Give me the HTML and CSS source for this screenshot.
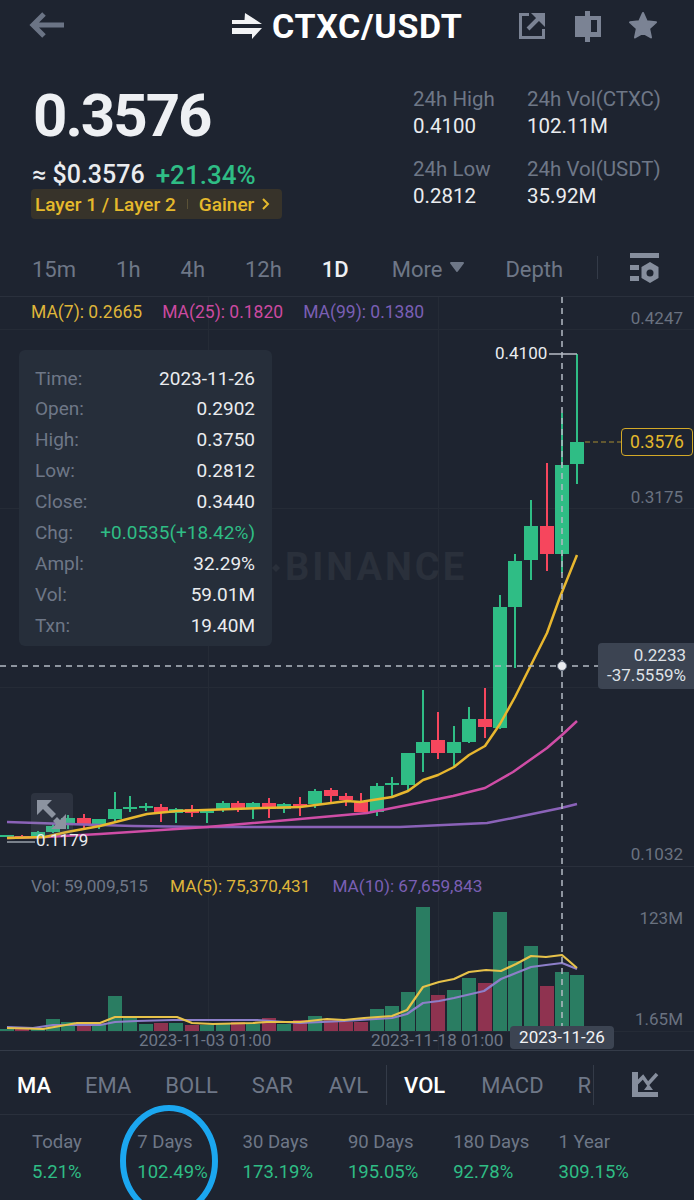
FILE: index.html
```html
<!DOCTYPE html>
<html lang="en">
<head>
  <meta charset="UTF-8">
  <title>CTXC/USDT</title>
  <link rel="stylesheet" href="styles.css">
</head>
<body>

<div class="page">

  <!-- top bar -->
  <div class="top-bar">
    <svg class="icon-back" width="36" height="28" viewBox="0 0 36 28">
      <path d="M35 13H4M15 2L4 13l11 11" fill="none" stroke="#6b7485" stroke-width="5"/>
    </svg>
    <div class="pair">
      <svg width="31" height="28" viewBox="0 0 31 28">
        <path d="M0 8h12.500l.5-7 17 11H0zM0 16h30L20 27v-5H0z" fill="#f2f3f5"/>
      </svg>
      <span class="pair-name">CTXC/USDT</span>
    </div>
    <div class="top-actions">
      <svg width="28" height="28" viewBox="0 0 28 28">
        <path d="M11 2.500H2.500v23h23V17" fill="none" stroke="#7b8394" stroke-width="3"/>
        <path d="M10 17L23 4" fill="none" stroke="#7b8394" stroke-width="4"/>
        <path d="M13 1h14v14z" fill="#7b8394"/>
      </svg>
      <svg width="28" height="33" viewBox="0 0 28 33">
        <path d="M1 6h26v21H1z" fill="#7b8394"/>
        <path d="M11 1h5v31h-5z" fill="#7b8394"/>
        <path d="M17 10h6v12h-6z" fill="#1e2430"/>
      </svg>
      <svg class="icon-star" width="30" height="30" viewBox="0 0 30 30">
        <path d="M15 2l3.800 8.300 9.200 1-6.900 6.100 1.900 9.100-8-4.600-8 4.600 1.900-9.100L2 11.300l9.200-1z" fill="#7b8394" stroke="#7b8394" stroke-width="2" stroke-linejoin="round"/>
      </svg>
    </div>
  </div>

  <!-- price summary -->
  <div class="summary">
    <div class="summary-left">
      <div class="last-price">0.3576</div>
      <div class="fiat-row">
        <span class="fiat">≈ $0.3576</span>
        <span class="change">+21.34%</span>
      </div>
      <div class="tag">
        <span>Layer 1 / Layer 2</span>
        <i class="tag-sep"></i>
        <span>Gainer</span>
        <svg width="9" height="12" viewBox="0 0 9 12">
          <path d="M2 1l5 5-5 5" fill="none" stroke="#e5b92c" stroke-width="2"/>
        </svg>
      </div>
    </div>
    <div class="stats">
      <div><div class="stat-label">24h High</div><div class="stat-value">0.4100</div></div>
      <div><div class="stat-label">24h Vol(CTXC)</div><div class="stat-value">102.11M</div></div>
      <div><div class="stat-label">24h Low</div><div class="stat-value">0.2812</div></div>
      <div><div class="stat-label">24h Vol(USDT)</div><div class="stat-value">35.92M</div></div>
    </div>
  </div>

  <!-- intervals -->
  <div class="intervals">
    <span>15m</span>
    <span>1h</span>
    <span>4h</span>
    <span>12h</span>
    <span class="active">1D</span>
    <span class="more">More
      <svg width="16" height="12" viewBox="0 0 16 12"><path d="M2 2h12L8 10z" fill="#6e7787" stroke="#6e7787" stroke-width="2" stroke-linejoin="round"/></svg>
    </span>
    <span>Depth</span>
    <i class="v-sep"></i>
    <svg class="icon-settings" width="30" height="31" viewBox="0 0 30 31">
      <path d="M0 0h29v5H0zM0 12h9v5H0zM0 23h9v5H0z" fill="#868e9d"/>
      <path d="M20 9l8.500 5v11L20 30l-8.500-5V14z" fill="#868e9d"/>
      <circle cx="20" cy="20" r="3.500" fill="#1e2430"/>
    </svg>
  </div>

  <!-- chart -->
  <div class="chart">
    <svg class="chart-canvas" id="chartCanvas" width="694" height="753" viewBox="0 297 694 753"></svg>

    <div class="watermark">BINANCE</div>

    <div class="legend legend-main">
      <span class="c-yellow">MA(7): 0.2665</span>
      <span class="c-pink">MA(25): 0.1820</span>
      <span class="c-purple">MA(99): 0.1380</span>
    </div>
    <div class="legend legend-vol">
      <span class="c-gray">Vol: 59,009,515</span>
      <span class="c-yellow">MA(5): 75,370,431</span>
      <span class="c-purple">MA(10): 67,659,843</span>
    </div>

    <div class="axis-label p1">0.4247</div>
    <div class="axis-label p2">0.3175</div>
    <div class="axis-label p3">0.1032</div>
    <div class="axis-label v1">123M</div>
    <div class="axis-label v2">1.65M</div>
    <div class="time-label t1">2023-11-03 01:00</div>
    <div class="time-label t2">2023-11-18 01:00</div>

    <div class="mark high-mark">0.4100</div>
    <div class="mark low-mark">0.1179</div>
    <div class="last-tag">0.3576</div>
    <div class="cross-tag">0.2233<br>-37.5559%</div>
    <div class="date-tag">2023-11-26</div>

    <div class="tooltip">
      <div class="tip-row"><span>Time:</span><b>2023-11-26</b></div>
      <div class="tip-row"><span>Open:</span><b>0.2902</b></div>
      <div class="tip-row"><span>High:</span><b>0.3750</b></div>
      <div class="tip-row"><span>Low:</span><b>0.2812</b></div>
      <div class="tip-row"><span>Close:</span><b>0.3440</b></div>
      <div class="tip-row"><span>Chg:</span><b class="c-green">+0.0535(+18.42%)</b></div>
      <div class="tip-row"><span>Ampl:</span><b>32.29%</b></div>
      <div class="tip-row"><span>Vol:</span><b>59.01M</b></div>
      <div class="tip-row"><span>Txn:</span><b>19.40M</b></div>
    </div>
  </div>

  <!-- indicators -->
  <div class="indicators">
    <span class="active">MA</span>
    <span>EMA</span>
    <span>BOLL</span>
    <span>SAR</span>
    <span class="nudge">AVL</span>
    <i class="v-sep tall"></i>
    <span class="active">VOL</span>
    <span class="nudge">MACD</span>
    <span>R</span>
    <i class="v-sep tall last"></i>
    <svg class="icon-indicator" width="27" height="26" viewBox="0 0 27 26">
      <path d="M0 0h6v20h20v5H0z" fill="#868e9d"/>
      <path d="M5 11l6-6 5 7 9-10" fill="none" stroke="#868e9d" stroke-width="3.500"/>
      <path d="M12 18h9l-4.500-6z" fill="#868e9d"/>
    </svg>
  </div>

  <!-- performance -->
  <div class="performance">
    <div><div class="perf-label">Today</div><div class="perf-value">5.21%</div></div>
    <div><div class="perf-label">7 Days</div><div class="perf-value">102.49%</div></div>
    <div><div class="perf-label">30 Days</div><div class="perf-value">173.19%</div></div>
    <div><div class="perf-label">90 Days</div><div class="perf-value">195.05%</div></div>
    <div><div class="perf-label">180 Days</div><div class="perf-value">92.78%</div></div>
    <div><div class="perf-label">1 Year</div><div class="perf-value">309.15%</div></div>
    <svg class="highlight-ring" width="110" height="120" viewBox="0 0 110 120">
      <ellipse cx="55" cy="60" rx="46" ry="53" fill="none" stroke="#1ba7f0" stroke-width="6"/>
    </svg>
  </div>

</div>

<script src="chart.js"></script>
</body>
</html>
```

FILE: styles.css
```css
* { box-sizing: border-box; }
html, body { height: 100%; }
body {
  margin: 0;
  background-color: #1e2430;
  font-family: Roboto, sans-serif;
  color: #eaecef;
  overflow: hidden;
}
.page {
  width: 694px;
  height: 1200px;
  position: relative;
  overflow: hidden;
}

/* top bar */
.top-bar {
  height: 52px;
  display: grid;
  grid-template-columns: 232px 286px 1fr;
  align-items: center;
}
.icon-back { margin-left: 29px; }
.pair {
  display: flex;
  align-items: center;
  gap: 9px;
}
.pair-name {
  font-size: 34px;
  font-weight: 700;
  letter-spacing: .7px;
  color: #fff;
  line-height: 52px;
}
.top-actions {
  display: flex;
  align-items: center;
  gap: 28px;
}
.icon-star { margin-left: -2px; }

/* summary */
.summary {
  height: 167px;
  display: flex;
}
.summary-left {
  width: 413px;
  padding: 34px 0 0 33px;
}
.last-price {
  font-size: 60px;
  font-weight: 700;
  letter-spacing: -2px;
  line-height: 60px;
  color: #eef0f3;
}
.fiat-row {
  margin: 14px 0 -1px -1px;
  font-size: 25px;
  line-height: 30px;
  font-weight: 500;
  display: flex;
  gap: 11px;
}
.change {
  font-size: 26px;
  color: #2fbd85;
}
.tag {
  margin-left: -2px;
  width: 251px;
  height: 30px;
  display: flex;
  align-items: center;
  padding-left: 4px;
  border-radius: 4px;
  background-color: #37332a;
  color: #e5b92c;
  font-size: 19px;
  font-weight: 500;
}
.tag-sep {
  width: 1px;
  height: 10px;
  margin: 0 11px;
  background-color: #5b5237;
}
.tag svg { margin-left: 7px; }
.stats {
  padding-top: 34px;
  display: grid;
  grid-template-columns: 114px auto;
  grid-auto-rows: 54px;
  row-gap: 16px;
  align-content: start;
}
.stat-label {
  font-size: 20.500px;
  line-height: 27px;
  color: #6e7787;
}
.stat-value {
  font-size: 20.500px;
  line-height: 27px;
  color: #eaecef;
}

/* intervals */
.intervals {
  height: 78px;
  padding: 31px 0 0 32px;
  display: flex;
  align-items: flex-start;
  gap: 40px;
  font-size: 22px;
  line-height: 40px;
  color: #6e7787;
  border-bottom: 1px solid #2a303c;
}
.intervals .active {
  color: #eef0f3;
  font-weight: 500;
}
.more {
  display: flex;
  align-items: center;
  gap: 7px;
  margin-left: 3px;
}
.more svg { margin-top: -6px; }
.v-sep {
  width: 1px;
  height: 23px;
  margin: 6px -8px 0 -6px;
  background-color: #343b48;
}
.icon-settings { margin-top: 3px; }

/* chart */
.chart {
  position: relative;
  height: 753px;
  font-size: 17px;
  line-height: 20px;
}
.chart-canvas {
  position: absolute;
  left: 0;
  top: 0;
}
.watermark {
  position: absolute;
  left: 285px;
  top: 250px;
  font-size: 38px;
  line-height: 40px;
  font-weight: 700;
  letter-spacing: 3px;
  color: #2a303b;
}
.legend {
  position: absolute;
  left: 31px;
  display: flex;
  gap: 20px;
  white-space: nowrap;
}
.legend-main { top: 5px; font-size: 17.500px; }
.legend-vol { top: 579px; gap: 22px; font-size: 17.200px; }
.c-yellow { color: #dfb53a; }
.c-pink { color: #cc4aa0; }
.c-purple { color: #7a5fb4; }
.c-gray { color: #6e7787; }
.c-green { color: #2fbd85; }
.axis-label {
  position: absolute;
  right: 11px;
  color: #6a7280;
}
.p1 { top: 11px; }
.p2 { top: 190px; }
.p3 { top: 547px; }
.v1 { top: 611px; }
.v2 { top: 712px; }
.time-label {
  position: absolute;
  top: 733px;
  color: #6e7787;
}
.t1 { left: 139px; }
.t2 { left: 371px; }
.mark {
  position: absolute;
  color: #eaecef;
}
.high-mark { left: 495px; top: 46px; }
.low-mark { left: 36px; top: 533px; }
.last-tag {
  position: absolute;
  left: 621px;
  top: 131px;
  width: 72px;
  height: 28px;
  border: 1px solid #d3a928;
  border-radius: 4px;
  text-align: center;
  font-size: 17.500px;
  line-height: 26px;
  color: #e5b92c;
}
.cross-tag {
  position: absolute;
  left: 598px;
  top: 346px;
  width: 96px;
  height: 46px;
  padding: 2px 8px 0 0;
  border-radius: 4px 0 0 4px;
  background-color: #3c4452;
  text-align: right;
  color: #dfe2e7;
  white-space: nowrap;
}
.date-tag {
  position: absolute;
  left: 510px;
  top: 729px;
  width: 104px;
  height: 23px;
  border-radius: 4px;
  background-color: #3c4452;
  text-align: center;
  line-height: 23px;
  color: #f2f3f5;
}
.tooltip {
  position: absolute;
  left: 19px;
  top: 53px;
  width: 253px;
  height: 296px;
  padding: 13.500px 17px 0 16px;
  border-radius: 6px;
  background-color: #262e3a;
  font-size: 19px;
  line-height: 30.900px;
}
.tip-row {
  display: flex;
  justify-content: space-between;
  color: #6e7787;
}
.tip-row b {
  font-weight: 400;
  color: #eaecef;
}
.tip-row b.c-green { color: #2fbd85; }

/* indicators */
.indicators {
  height: 65px;
  padding: 0 0 0 17px;
  display: flex;
  align-items: center;
  gap: 34px;
  font-size: 22px;
  color: #6e7787;
  border-top: 1px solid #343b48;
  border-bottom: 1px solid #2a303c;
}
.indicators span { padding-top: 5px; }
.indicators .active {
  color: #fff;
  font-weight: 500;
}
.nudge { margin-left: 2px; }
.v-sep.tall {
  height: 40px;
  margin: 4px -17px 0 -16px;
}
.v-sep.tall.last { margin: 4px 4px 0 -32px; }
.icon-indicator { margin-top: 4px; }

/* performance */
.performance {
  position: relative;
  padding: 12px 0 0 32px;
  display: grid;
  grid-template-columns: repeat(6, 105.300px);
}
.perf-label {
  font-size: 18.500px;
  line-height: 30px;
  color: #6e7787;
}
.perf-value {
  font-size: 18.500px;
  line-height: 30px;
  color: #2fbd85;
}
.highlight-ring {
  position: absolute;
  left: 114px;
  top: -14px;
}
```

FILE: chart.js
```js
// [x, wick top, wick bottom, body top, body bottom, up?, volume bar top]
const candles = [
  [7, 835, 837, 835, 837, 1, 1029],
  [22, 835, 838, 836, 838, 0, 1028],
  [38, 831, 837, 832, 836, 1, 1028],
  [53, 823, 833, 826, 832, 1, 1019],
  [68, 815, 829, 818, 823, 1, 1022],
  [84, 814, 828, 818, 824, 0, 1023],
  [99, 819, 829, 819, 824, 1, 1025],
  [115, 792, 822, 809, 819, 1, 996],
  [130, 796, 812, 807, 808, 1, 1018],
  [146, 803, 811, 806, 807, 1, 1024],
  [161, 804, 822, 807, 813, 0, 1023],
  [176, 808, 823, 809, 813, 1, 1023],
  [192, 805, 817, 809, 813, 0, 1025],
  [207, 809, 823, 810, 813, 1, 1025],
  [223, 801, 812, 803, 809, 1, 1023],
  [238, 801, 812, 803, 809, 0, 1022],
  [253, 802, 819, 803, 809, 1, 1024],
  [269, 798, 818, 803, 809, 0, 1018],
  [284, 803, 813, 804, 809, 1, 1024],
  [300, 797, 816, 804, 806, 0, 1020],
  [315, 789, 808, 791, 804, 1, 1016],
  [331, 788, 804, 790, 796, 0, 1020],
  [346, 793, 806, 796, 800, 0, 1022],
  [361, 793, 812, 801, 812, 0, 1022],
  [377, 783, 816, 786, 812, 1, 1009],
  [392, 777, 798, 783, 785, 1, 1006],
  [408, 753, 792, 753, 785, 1, 992],
  [423, 690, 772, 742, 753, 1, 907],
  [438, 712, 759, 740, 753, 0, 995],
  [454, 726, 767, 742, 753, 1, 990],
  [469, 707, 743, 719, 742, 1, 978],
  [485, 688, 738, 719, 727, 0, 983],
  [500, 595, 729, 607, 728, 1, 912],
  [515, 554, 668, 561, 607, 1, 961],
  [531, 500, 580, 526, 560, 1, 946],
  [547, 463, 571, 526, 554, 0, 986],
  [562, 413, 573, 465, 554, 1, 972],
  [577, 354, 484, 442, 464, 1, 975]
];

const lines = {
  purple: "7,822 67,824 133,826 207,827 400,827 487,823 513,818 561,808 577,804",
  pink: "7,838 45,837 100,834 207,827 300,819 367,813 423,802 453,796 485,788 513,772 547,748 562,735 577,721",
  yellow: "7,838 45,837 67,832 100,826 147,814 177,811 233,809 300,807 347,801 360,802 392,797 408,791 423,780 438,775 454,767 469,755 485,746 500,724 515,697 532,663 547,633 560,597 577,555",
  volMa5: "7,1028 43,1029 77,1023 100,1023 115,1017 177,1017 192,1023 213,1024 253,1023 267,1022 300,1022 327,1019 344,1020 364,1018 392,1016 407,1010 423,987 439,982 454,979 469,972 486,970 501,971 516,964 531,956 546,957 562,955 577,968",
  volMa10: "7,1027 33,1028 53,1025 100,1025 115,1022 137,1021 173,1020 257,1020 300,1023 344,1021 392,1018 407,1014 423,1003 439,1001 454,998 484,991 501,979 516,973 531,967 546,965 562,963 577,969"
};

const NS = "http://www.w3.org/2000/svg";
const canvas = document.getElementById("chartCanvas");

function add(tag, attrs) {
  const el = document.createElementNS(NS, tag);
  for (const k in attrs) el.setAttribute(k, attrs[k]);
  canvas.appendChild(el);
  return el;
}

function rect(x, y, w, h, fill) {
  return add("rect", { x, y, width: w, height: h, fill });
}

function polyline(points, stroke, width) {
  return add("polyline", { points, stroke, "stroke-width": width, fill: "none", "stroke-linejoin": "round" });
}

// grid
[329, 508, 687, 1031].forEach(y => rect(0, y, 694, 1, "#252b36"));
rect(0, 866, 694, 1, "#2a303c");
[208, 438].forEach(x => rect(x, 297, 1, 753, "#252b36"));

// small mark in front of the watermark
add("path", { d: "M276 564l4 4-4 4-4-4z", fill: "#2a303b" });

// volume
candles.forEach(c => {
  rect(c[0] - 7, c[6], 14, 1031 - c[6], c[5] ? "#2a7d62" : "#8f3350");
});
polyline(lines.volMa10, "#8d7fc9", 2.2);
polyline(lines.volMa5, "#e7c24a", 2.2);

// candles
candles.forEach(c => {
  const color = c[5] ? "#2fbd85" : "#f6465d";
  rect(c[0] - 1, c[1], 2, c[2] - c[1], color);
  rect(c[0] - 7, c[3], 14, Math.max(c[4] - c[3], 2), color);
});

polyline(lines.purple, "#8a62b8", 2.5);
polyline(lines.pink, "#cf4da6", 2.5);
polyline(lines.yellow, "#e8b72f", 2.5);

// high, low and last price leaders
add("path", { d: "M549 354H577", stroke: "#b8bdc6", "stroke-width": 1.5, fill: "none" });
add("path", { d: "M7 842H35", stroke: "#9aa0aa", "stroke-width": 1.5, fill: "none" });
add("path", { d: "M585 442H621", stroke: "#7a6a30", "stroke-width": 1.5, "stroke-dasharray": "5 3", fill: "none" });

// expand button
add("rect", { x: 31, y: 793, width: 42, height: 42, rx: 4, fill: "#8c93a0", "fill-opacity": 0.14 });
add("path", { d: "M37 800h15l-5 5 9 9-4 4-9-9-6 6zM66 829H51l5-5 -3-3 4-4 3 3 6-6z", fill: "#8c93a0" });

// crosshair
const dash = { stroke: "#b4bac4", "stroke-width": 1.5, "stroke-dasharray": "6 5", fill: "none" };
add("path", Object.assign({ d: "M562 297V1026" }, dash));
add("path", Object.assign({ d: "M0 666H598" }, dash));
add("circle", { cx: 562, cy: 666, r: 4.5, fill: "#eaecef", stroke: "#6e7787", "stroke-width": 1 });
```
